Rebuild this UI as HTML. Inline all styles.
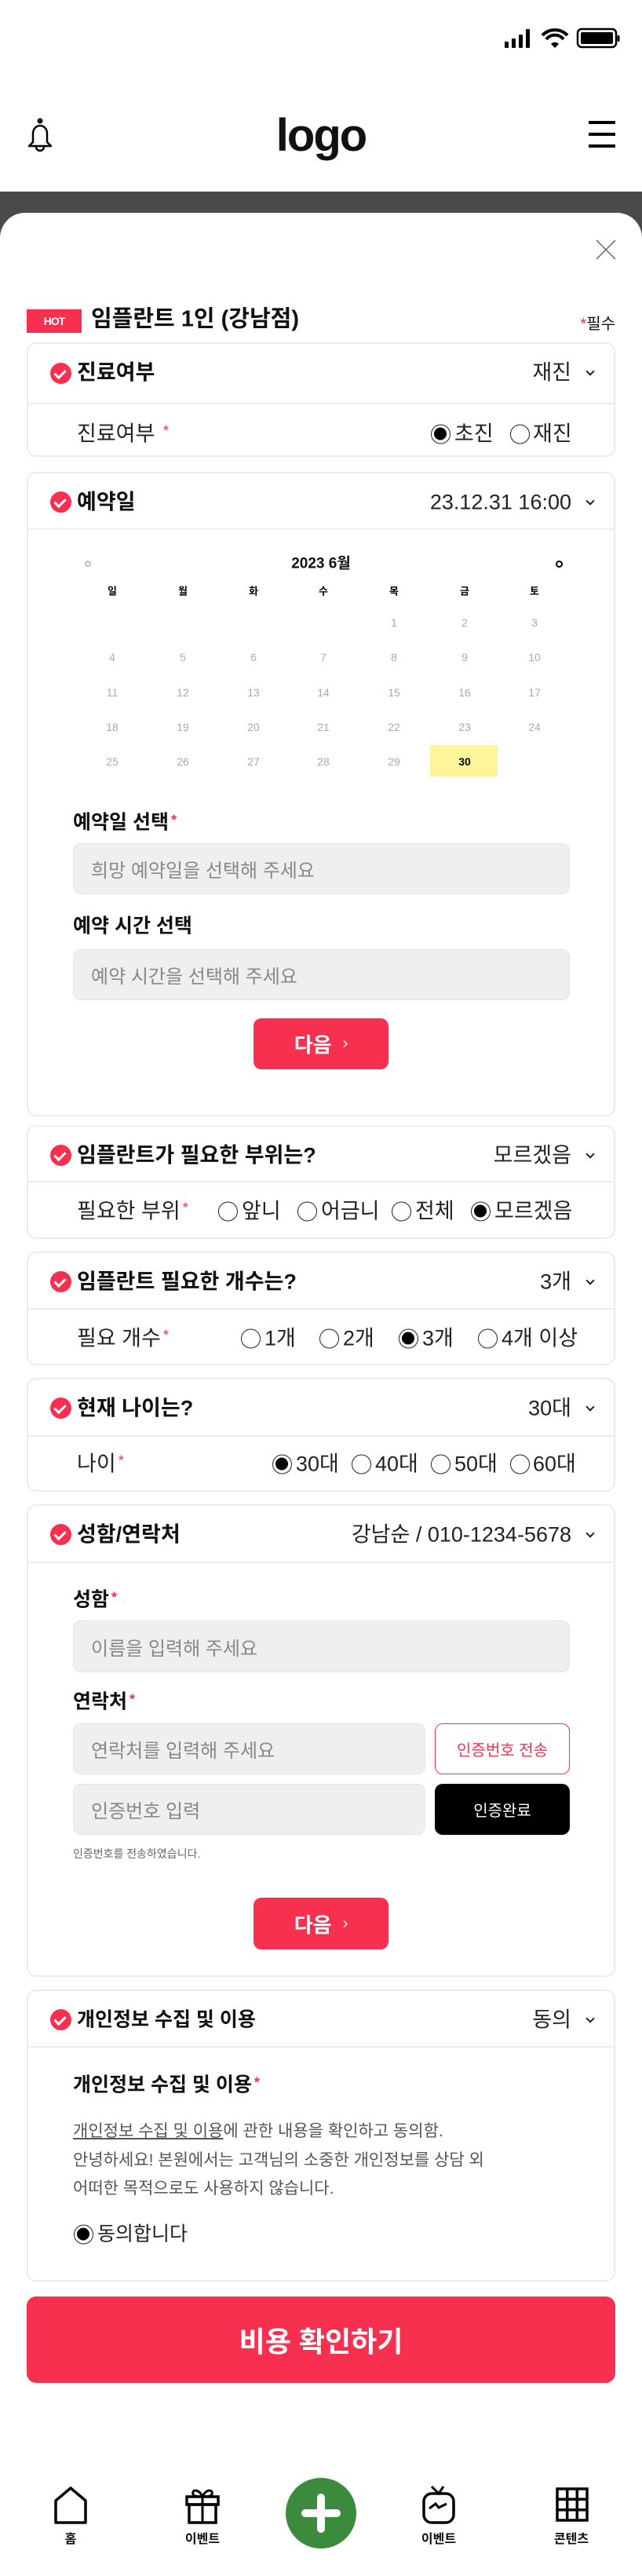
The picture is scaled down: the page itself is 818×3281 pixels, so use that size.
<!DOCTYPE html>
<html><head><meta charset="utf-8">
<style>
*{margin:0;padding:0;box-sizing:border-box}
body{width:818px;height:3275px;position:relative;background:#fff;font-family:"Liberation Sans","Noto Sans CJK KR",sans-serif;color:#111;overflow:hidden}
.a{position:absolute}
.card{position:absolute;left:34px;width:750px;border:2px solid #ececec;border-radius:12px;background:#fff}
.hd{position:absolute;left:0;right:0;height:2px;background:#ececec}
.chk{position:absolute;left:28px;width:27px;height:27px;border-radius:50%;background:#f7304f}
.chk:after{content:"";position:absolute;left:8px;top:6px;width:6px;height:11px;border:solid #fff;border-width:0 3px 3px 0;transform:rotate(45deg)}
.t{position:absolute;left:62px;font-size:27px;font-weight:bold;line-height:1;transform:translateY(-50%)}
.v{position:absolute;right:54px;font-size:27px;line-height:1;transform:translateY(-50%);color:#222}
.cv{position:absolute;right:26px;width:8px;height:8px;border:solid #222;border-width:0 2px 2px 0;transform:translateY(-75%) rotate(45deg)}
.lb{position:absolute;left:62px;font-size:27px;line-height:1;transform:translateY(-50%);color:#222}
.st{color:#f7304f;font-size:18px;vertical-align:top;margin-left:3px}
.r{position:absolute;width:25px;height:25px;border:1.5px solid #222;border-radius:50%;transform:translateY(-50%)}
.r.on:after{content:"";position:absolute;left:3px;top:3px;width:16px;height:16px;border-radius:50%;background:#000}
.rl{position:absolute;font-size:27px;line-height:1;transform:translateY(-50%);color:#222}
.inp{position:absolute;background:#efefef;border:1.5px solid #e4e4e4;border-radius:10px;font-size:24px;color:#888;padding-left:22px;display:flex;align-items:center}
.lbl{position:absolute;left:93px;font-size:25px;font-weight:bold;line-height:1;transform:translateY(-50%)}
.btn{position:absolute;background:#f7304f;color:#fff;border-radius:10px;font-size:26px;font-weight:bold;display:flex;align-items:center;justify-content:center}
.cal{position:absolute;font-size:14px;color:#aaa;width:60px;text-align:center;line-height:1;transform:translate(-50%,-50%)}
.nl{position:absolute;font-size:16px;font-weight:bold;transform:translate(-50%,-50%);line-height:1}
</style></head><body>
<!-- status -->
<svg class="a" style="left:640px;top:34px" width="150" height="30" viewBox="0 0 150 30">
<rect x="3" y="19" width="5" height="8" rx="1"/><rect x="12" y="15" width="5" height="12" rx="1"/><rect x="21" y="10" width="5" height="17" rx="1"/><rect x="30" y="3" width="5" height="24" rx="1"/>
<path d="M51 11a22 22 0 0 1 32 0" stroke="#000" stroke-width="4" fill="none"/><path d="M56 16a14 14 0 0 1 22 0" stroke="#000" stroke-width="4" fill="none"/><path d="M62 22l5 5 5-5a7 7 0 0 0-10 0z"/>
<rect x="96" y="3" width="49" height="23" rx="5" fill="none" stroke="#000" stroke-width="2.5"/><rect x="100" y="7" width="41" height="15" rx="2"/><rect x="146.5" y="11" width="3" height="8" rx="1"/>
</svg>
<!-- header -->
<svg class="a" style="left:32px;top:150px" width="38" height="44" viewBox="0 0 38 44"><path d="M19 3v3M10 31V20a9 10 0 0 1 18 0v11l5 5H5z" fill="none" stroke="#000" stroke-width="2.5" stroke-linejoin="round"/><circle cx="19" cy="4" r="2.5" fill="none" stroke="#000" stroke-width="2"/><path d="M14 37a5 5 0 0 0 10 0" fill="none" stroke="#000" stroke-width="2.5"/></svg>
<div class="a" style="left:0;width:818px;top:138px;text-align:center;font-size:58px;font-weight:bold;letter-spacing:-2px;line-height:70px">logo</div>
<div class="a" style="left:750px;top:154px;width:34px;height:4px;background:#000"></div>
<div class="a" style="left:750px;top:169px;width:34px;height:4px;background:#000"></div>
<div class="a" style="left:750px;top:184px;width:34px;height:4px;background:#000"></div>
<div class="a" style="left:0;top:244px;width:818px;height:60px;background:#4a4a4a"></div>
<div class="a" style="left:0;top:271px;width:818px;height:3010px;background:#fff;border-radius:32px 32px 0 0"></div>
<svg class="a" style="left:758px;top:304px" width="28" height="28"><path d="M2 2L26 26M26 2L2 26" stroke="#666" stroke-width="1.5"/></svg>
<div class="a" style="left:34px;top:394px;width:70px;height:30px;background:#f7304f;color:#fff;font-size:14px;font-weight:bold;text-align:center;line-height:30px;letter-spacing:-1px">HOT</div>
<div class="a" style="left:116px;top:407px;font-size:29px;font-weight:bold;line-height:1;transform:translateY(-50%)">임플란트 1인 (강남점)</div>
<div class="a" style="right:34px;top:413px;font-size:20px;line-height:1;transform:translateY(-50%)"><span style="color:#f7304f">*</span>필수</div>

<!-- card1 -->
<div class="card" style="top:436px;height:146px">
<div class="chk" style="top:24px"></div><div class="t" style="top:37px">진료여부</div><div class="v" style="top:37px">재진</div><div class="cv" style="top:37px"></div>
<div class="hd" style="top:75px"></div>
<div class="lb" style="top:115px">진료여부 <span class="st">*</span></div>
<div class="r on" style="left:513px;top:115px"></div><div class="rl" style="left:543px;top:115px">초진</div>
<div class="r" style="left:614px;top:115px"></div><div class="rl" style="left:643px;top:115px">재진</div>
</div>

<!-- card2 -->
<div class="card" style="top:601px;height:821px">
<div class="chk" style="top:23px"></div><div class="t" style="top:37px">예약일</div><div class="v" style="top:37px">23.12.31 16:00</div><div class="cv" style="top:37px"></div>
<div class="hd" style="top:70px"></div>
</div>
<div class="a" style="left:108px;top:714px;width:8px;height:8px;border:2px solid #bbb;border-radius:50%"></div>
<div class="a" style="left:708px;top:714px;width:9px;height:9px;border:2.5px solid #000;border-radius:50%"></div>
<div class="a" style="left:409px;top:718px;font-size:19px;font-weight:bold;transform:translate(-50%,-50%);line-height:1">2023 6월</div>
<div class="a" style="left:548px;top:949px;width:86px;height:40px;background:#fdf59a"></div>
<div id="cal"></div>
<div class="lbl" style="top:1048px">예약일 선택<span class="st">*</span></div>
<div class="inp" style="left:93px;top:1074px;width:633px;height:65px">희망 예약일을 선택해 주세요</div>
<div class="lbl" style="top:1180px">예약 시간 선택</div>
<div class="inp" style="left:93px;top:1209px;width:633px;height:65px">예약 시간을 선택해 주세요</div>
<div class="btn" style="left:323px;top:1297px;width:172px;height:65px">다음 <span style="font-size:20px;margin-left:14px;font-weight:normal">›</span></div>

<!-- card3 -->
<div class="card" style="top:1433px;height:145px">
<div class="chk" style="top:23px"></div><div class="t" style="top:37px">임플란트가 필요한 부위는?</div><div class="v" style="top:37px">모르겠음</div><div class="cv" style="top:37px"></div>
<div class="hd" style="top:69px"></div>
<div class="lb" style="top:108px">필요한 부위<span class="st">*</span></div>
<div class="r" style="left:242px;top:108px"></div><div class="rl" style="left:272px;top:108px">앞니</div>
<div class="r" style="left:343px;top:108px"></div><div class="rl" style="left:373px;top:108px">어금니</div>
<div class="r" style="left:463px;top:108px"></div><div class="rl" style="left:493px;top:108px">전체</div>
<div class="r on" style="left:564px;top:108px"></div><div class="rl" style="left:594px;top:108px">모르겠음</div>
</div>

<!-- card4 -->
<div class="card" style="top:1594px;height:145px">
<div class="chk" style="top:23px"></div><div class="t" style="top:37px">임플란트 필요한 개수는?</div><div class="v" style="top:37px">3개</div><div class="cv" style="top:37px"></div>
<div class="hd" style="top:70px"></div>
<div class="lb" style="top:109px">필요 개수<span class="st">*</span></div>
<div class="r" style="left:271px;top:109px"></div><div class="rl" style="left:301px;top:109px">1개</div>
<div class="r" style="left:371px;top:109px"></div><div class="rl" style="left:401px;top:109px">2개</div>
<div class="r on" style="left:472px;top:109px"></div><div class="rl" style="left:502px;top:109px">3개</div>
<div class="r" style="left:573px;top:109px"></div><div class="rl" style="left:603px;top:109px">4개 이상</div>
</div>

<!-- card5 -->
<div class="card" style="top:1755px;height:145px">
<div class="chk" style="top:23px"></div><div class="t" style="top:37px">현재 나이는?</div><div class="v" style="top:37px">30대</div><div class="cv" style="top:37px"></div>
<div class="hd" style="top:71px"></div>
<div class="lb" style="top:108px">나이<span class="st">*</span></div>
<div class="r on" style="left:311px;top:108px"></div><div class="rl" style="left:341px;top:108px">30대</div>
<div class="r" style="left:412px;top:108px"></div><div class="rl" style="left:442px;top:108px">40대</div>
<div class="r" style="left:513px;top:108px"></div><div class="rl" style="left:543px;top:108px">50대</div>
<div class="r" style="left:614px;top:108px"></div><div class="rl" style="left:643px;top:108px">60대</div>
</div>

<!-- card6 -->
<div class="card" style="top:1916px;height:602px">
<div class="chk" style="top:23px"></div><div class="t" style="top:37px">성함/연락처</div><div class="v" style="top:37px">강남순 / 010-1234-5678</div><div class="cv" style="top:37px"></div>
<div class="hd" style="top:71px"></div>
</div>
<div class="lbl" style="top:2038px">성함<span class="st">*</span></div>
<div class="inp" style="left:93px;top:2064px;width:633px;height:66px">이름을 입력해 주세요</div>
<div class="lbl" style="top:2168px">연락처<span class="st">*</span></div>
<div class="inp" style="left:93px;top:2195px;width:449px;height:65px">연락처를 입력해 주세요</div>
<div class="a" style="left:554px;top:2195px;width:172px;height:65px;border:1.5px solid #f7304f;border-radius:10px;color:#f7304f;font-size:20px;display:flex;align-items:center;justify-content:center">인증번호 전송</div>
<div class="inp" style="left:93px;top:2272px;width:449px;height:65px">인증번호 입력</div>
<div class="a" style="left:554px;top:2272px;width:172px;height:65px;background:#000;border-radius:10px;color:#fff;font-size:20px;display:flex;align-items:center;justify-content:center">인증완료</div>
<div class="a" style="left:93px;top:2361px;font-size:14px;color:#666;transform:translateY(-50%);line-height:1">인증번호를 전송하였습니다.</div>
<div class="btn" style="left:323px;top:2417px;width:172px;height:66px">다음 <span style="font-size:20px;margin-left:14px;font-weight:normal">›</span></div>

<!-- card7 -->
<div class="card" style="top:2534px;height:372px">
<div class="chk" style="top:23px"></div><div class="t" style="top:37px;font-size:25px">개인정보 수집 및 이용</div><div class="v" style="top:37px">동의</div><div class="cv" style="top:37px"></div>
<div class="hd" style="top:70px"></div>
</div>
<div class="lbl" style="top:2656px">개인정보 수집 및 이용<span class="st">*</span></div>
<div class="a" style="left:93px;top:2697px;font-size:21px;color:#555;line-height:36.5px">
<span style="text-decoration:underline">개인정보 수집 및 이용</span>에 관한 내용을 확인하고 동의함.<br>안녕하세요! 본원에서는 고객님의 소중한 개인정보를 상담 외<br>어떠한 목적으로도 사용하지 않습니다.</div>
<div class="r on" style="left:94px;top:2846px"></div><div class="rl" style="left:124px;top:2846px;font-size:25px">동의합니다</div>

<div class="btn" style="left:34px;top:2925px;width:750px;height:110px;font-size:36px;border-radius:12px">비용 확인하기</div>

<!-- nav -->
<svg class="a" style="left:68px;top:3166px" width="44" height="50"><path d="M3 47V19L22 3l19 16v28z" fill="none" stroke="#000" stroke-width="3.5" stroke-linejoin="round"/></svg>
<div class="nl" style="left:90px;top:3235px">홈</div>
<svg class="a" style="left:235px;top:3166px" width="46" height="50"><rect x="3" y="14" width="40" height="10" fill="none" stroke="#000" stroke-width="3.5"/><rect x="6" y="24" width="34" height="23" fill="none" stroke="#000" stroke-width="3.5"/><path d="M23 14v33M23 14c-4-10-14-10-12-3 1 3 8 3 12 3zM23 14c4-10 14-10 12-3-1 3-8 3-12 3z" fill="none" stroke="#000" stroke-width="3"/></svg>
<div class="nl" style="left:258px;top:3235px">이벤트</div>
<div class="a" style="left:364px;top:3156px;width:90px;height:90px;border-radius:50%;background:#3c8a3c"></div>
<div class="a" style="left:404px;top:3176px;width:10px;height:50px;background:#fff;border-radius:5px"></div>
<div class="a" style="left:384px;top:3196px;width:50px;height:10px;background:#fff;border-radius:5px"></div>
<svg class="a" style="left:537px;top:3164px" width="44" height="52"><rect x="3" y="12" width="38" height="37" rx="10" fill="none" stroke="#000" stroke-width="3.5"/><path d="M13 3l9 9 6-9" fill="none" stroke="#000" stroke-width="3"/><path d="M10 31l8-6 4 5 10-5" fill="none" stroke="#000" stroke-width="3"/></svg>
<div class="nl" style="left:559px;top:3235px">이벤트</div>
<svg class="a" style="left:708px;top:3168px" width="42" height="44"><path d="M2 2h38v40H2zM14.7 2v40M27.3 2v40M2 15.3h38M2 28.7h38" fill="none" stroke="#000" stroke-width="3.5"/></svg>
<div class="nl" style="left:728px;top:3235px">콘텐츠</div>

<div class="a" style="left:0;top:0">
<div class="cal" style="left:143px;top:753px;color:#000;font-weight:bold;font-size:13px">일</div>
<div class="cal" style="left:233px;top:753px;color:#000;font-weight:bold;font-size:13px">월</div>
<div class="cal" style="left:323px;top:753px;color:#000;font-weight:bold;font-size:13px">화</div>
<div class="cal" style="left:412px;top:753px;color:#000;font-weight:bold;font-size:13px">수</div>
<div class="cal" style="left:502px;top:753px;color:#000;font-weight:bold;font-size:13px">목</div>
<div class="cal" style="left:592px;top:753px;color:#000;font-weight:bold;font-size:13px">금</div>
<div class="cal" style="left:681px;top:753px;color:#000;font-weight:bold;font-size:13px">토</div>
<div class="cal" style="left:502px;top:793px">1</div><div class="cal" style="left:592px;top:793px">2</div><div class="cal" style="left:681px;top:793px">3</div>
<div class="cal" style="left:143px;top:837px">4</div><div class="cal" style="left:233px;top:837px">5</div><div class="cal" style="left:323px;top:837px">6</div><div class="cal" style="left:412px;top:837px">7</div><div class="cal" style="left:502px;top:837px">8</div><div class="cal" style="left:592px;top:837px">9</div><div class="cal" style="left:681px;top:837px">10</div>
<div class="cal" style="left:143px;top:882px">11</div><div class="cal" style="left:233px;top:882px">12</div><div class="cal" style="left:323px;top:882px">13</div><div class="cal" style="left:412px;top:882px">14</div><div class="cal" style="left:502px;top:882px">15</div><div class="cal" style="left:592px;top:882px">16</div><div class="cal" style="left:681px;top:882px">17</div>
<div class="cal" style="left:143px;top:926px">18</div><div class="cal" style="left:233px;top:926px">19</div><div class="cal" style="left:323px;top:926px">20</div><div class="cal" style="left:412px;top:926px">21</div><div class="cal" style="left:502px;top:926px">22</div><div class="cal" style="left:592px;top:926px">23</div><div class="cal" style="left:681px;top:926px">24</div>
<div class="cal" style="left:143px;top:970px">25</div><div class="cal" style="left:233px;top:970px">26</div><div class="cal" style="left:323px;top:970px">27</div><div class="cal" style="left:412px;top:970px">28</div><div class="cal" style="left:502px;top:970px">29</div><div class="cal" style="left:592px;top:970px;color:#000;font-weight:bold">30</div>
</div>
</body></html>
